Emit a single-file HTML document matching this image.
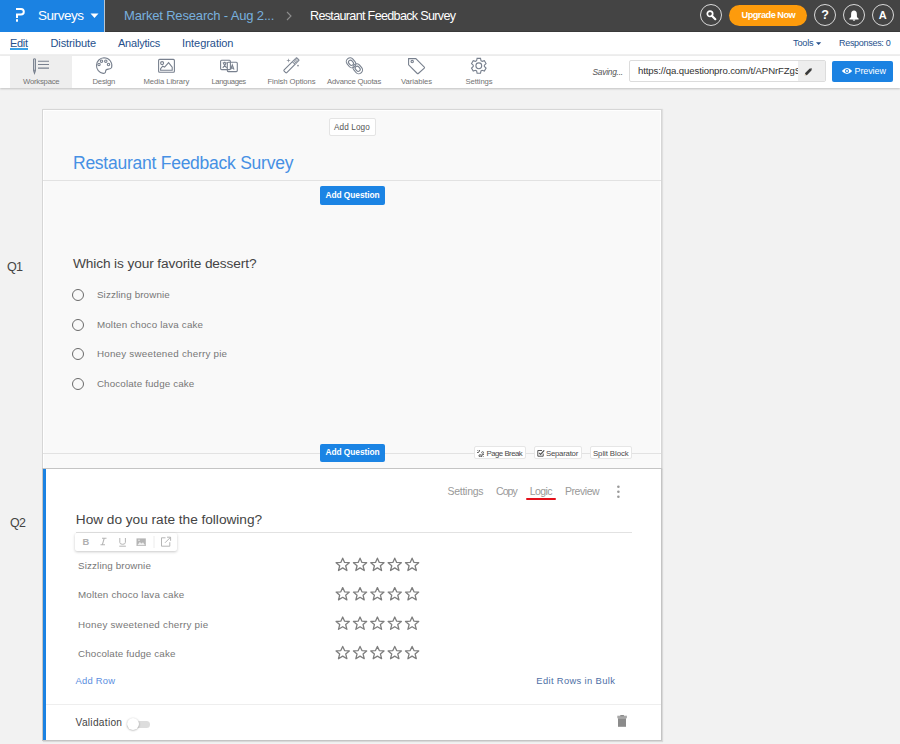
<!DOCTYPE html>
<html><head><meta charset="utf-8">
<style>
*{box-sizing:border-box;margin:0;padding:0}
html,body{width:900px;height:744px;overflow:hidden;background:#f2f2f2;font-family:"Liberation Sans",sans-serif;position:relative}
.a{position:absolute;white-space:nowrap;line-height:1}
#hdr{position:absolute;left:0;top:0;width:900px;height:32px;background:#444;border-bottom:1px solid #3a3a3a}
#blue{position:absolute;left:0;top:0;width:104px;height:32px;background:#1b82e2}
#sep{position:absolute;left:104px;top:0;width:1px;height:32px;background:#b9c6d2}
#sub{position:absolute;left:0;top:32px;width:900px;height:24px;background:#fff;border-bottom:2px solid #efefef}
#tb{position:absolute;left:0;top:56px;width:900px;height:32px;background:#fff;box-shadow:0 1px 2px rgba(0,0,0,.2)}
.nav{color:#26508c;font-size:11px;top:37.5px}
.lbl{position:absolute;top:78.2px;font-size:7.7px;color:#737373;white-space:nowrap;line-height:1}
.circ{position:absolute;top:4px;width:22px;height:22px;border:1px solid #d9d9d9;border-radius:50%}
.ic{fill:none;stroke:#78808e;stroke-width:1.1}

#card1{position:absolute;left:43px;top:110px;width:618px;height:358px;background:#f9f9f9;box-shadow:inset 1px 1px 0 #fff,inset -1px 0 0 #fff,0 0 0 1px #d6d6d6,1px 0 1px 1px rgba(0,0,0,.07)}
#card2{position:absolute;left:43px;top:469px;width:618px;height:271px;background:#fff;box-shadow:0 0 0 1px #c4c4c4,1px 1px 1px 1px rgba(0,0,0,.1)}
.btnq{width:64.5px;height:18.7px;background:#1b84e4;border-radius:2px}
.qt{font-size:8.4px;font-weight:bold;color:#fff;letter-spacing:-0.05px}
.radio{position:absolute;left:72px;width:12.2px;height:12.2px;border:1px solid #6a6a6a;border-radius:50%}
.opt{position:absolute;left:96.9px;font-size:9.8px;color:#777;white-space:nowrap;line-height:1;letter-spacing:0.14px}
.row{position:absolute;left:78px;font-size:9.8px;color:#777;white-space:nowrap;line-height:1;letter-spacing:0.14px}
.smb{top:445.5px;height:13.5px;background:#fff;border:1px solid #e6e6e6;border-radius:2px}
.smt{top:449.6px;font-size:7.8px;color:#4a4a4a}
.mt{top:485.6px;font-size:10.5px;color:#999}
</style></head><body>
<div id="hdr"></div>
<div id="blue"></div>
<div id="sep"></div>
<svg class="a" style="left:0;top:0" width="32" height="32" viewBox="0 0 32 32"><path d="M16 8.9H21A2.8 2.8 0 0 1 21 14.5H17V18" fill="none" stroke="#fff" stroke-width="2"/><rect x="16" y="19.2" width="2" height="2.5" fill="#fff"/></svg>
<div class="a" style="left:38px;top:8.5px;font-size:13.5px;color:#fff;letter-spacing:-0.45px">Surveys</div>
<svg class="a" style="left:90px;top:13px" width="9" height="6" viewBox="0 0 9 6"><path d="M0.5 0.5h8L4.5 5z" fill="#fff"/></svg>
<div class="a" style="left:124px;top:8.5px;font-size:13px;color:#78b0de;letter-spacing:-0.17px">Market Research - Aug 2...</div>
<svg class="a" style="left:285px;top:11px" width="9" height="10" viewBox="0 0 9 10"><path d="M2 1l4 4-4 4" fill="none" stroke="#8e8e8e" stroke-width="1.1"/></svg>
<div class="a" style="left:310px;top:10px;font-size:12.6px;color:#fff;letter-spacing:-0.68px">Restaurant Feedback Survey</div>
<div class="circ" style="left:700px"></div>
<svg class="a" style="left:700px;top:4px" width="22" height="22" viewBox="0 0 22 22"><circle cx="10" cy="9.8" r="2.7" fill="none" stroke="#fff" stroke-width="1.7"/><path d="M11.8 11.8L15.3 15.2" stroke="#fff" stroke-width="2.2" stroke-linecap="round"/></svg>
<div class="a" style="left:729px;top:5px;width:78px;height:21px;border-radius:11px;background:#fd9b0c"></div>
<div class="a" style="left:741.5px;top:10.6px;font-size:9.2px;color:#fff;font-weight:bold;letter-spacing:-0.5px">Upgrade Now</div>
<div class="circ" style="left:813.5px"></div>
<div class="a" style="left:821.2px;top:9px;font-size:12.6px;color:#fff;font-weight:bold">?</div>
<div class="circ" style="left:842.5px"></div>
<svg class="a" style="left:842.5px;top:4px" width="22" height="22" viewBox="0 0 22 22"><path d="M11 6.6C9.2 6.6 8.1 8 8.1 10.2V12.6Q8.1 13.6 6.4 14.6V15.4H15.6V14.6Q13.9 13.6 13.9 12.6V10.2C13.9 8 12.8 6.6 11 6.6Z" fill="#fff"/><path d="M9.6 15.6Q9.8 16.8 11 16.8Q12.2 16.8 12.4 15.6Z" fill="#fff"/></svg>
<div class="circ" style="left:871.5px"></div>
<div class="a" style="left:878.8px;top:10px;font-size:11px;color:#fff;font-weight:bold">A</div>

<div id="sub"></div>
<div class="a nav" style="left:10px;letter-spacing:-0.3px">Edit</div>
<div class="a" style="left:10px;top:48px;width:18px;height:1.5px;background:#3aa0e6"></div>
<div class="a nav" style="left:50.5px;letter-spacing:-0.1px">Distribute</div>
<div class="a nav" style="left:118px;letter-spacing:-0.22px">Analytics</div>
<div class="a nav" style="left:182px;letter-spacing:-0.05px">Integration</div>
<div class="a nav" style="left:793px;top:39px;font-size:9.2px;letter-spacing:-0.2px">Tools</div>
<svg class="a" style="left:816px;top:42px" width="6" height="4" viewBox="0 0 6 4"><path d="M0 0.3h5.2L2.6 3z" fill="#26508c"/></svg>
<div class="a nav" style="left:839px;top:39.3px;font-size:9px;letter-spacing:-0.3px">Responses: 0</div>

<div id="tb"></div>
<div class="a" style="left:10px;top:56px;width:62px;height:32px;background:#eee"></div>
<svg class="a" style="left:0;top:0" width="500" height="90" viewBox="0 0 500 90">
 <!-- workspace -->
 <path class="ic" d="M33.6 59.2Q34.5 58.3 35.4 59.2V70.6L34.5 73.2L33.6 70.6Z M33.6 70.2H35.4"/>
 <path class="ic" d="M38 61.3H49M38 64.5H49M38 68.1H49" stroke-width="1.2"/>
 <!-- design -->
 <path class="ic" d="M104 57.7A7.9 7.9 0 0 1 111.6 67.6Q111 69 108.3 69.1Q105.6 69.3 105.6 71.3Q105.6 73.5 103.2 73.4A7.9 7.9 0 0 1 104 57.7Z"/>
 <circle class="ic" cx="99" cy="64.4" r="1.2"/><circle class="ic" cx="101.5" cy="61.2" r="1.2"/><circle class="ic" cx="105.8" cy="61.2" r="1.2"/><circle class="ic" cx="108.5" cy="64.5" r="1.2"/>
 <!-- media -->
 <rect class="ic" x="158.6" y="59.4" width="15.8" height="12.9" rx="1"/>
 <circle class="ic" cx="162.1" cy="63.1" r="1.5"/>
 <path class="ic" d="M160.6 70.2V68.7L162.7 66.2L164.6 67L168.6 62.6L172.2 67.2V70.2Z"/>
 <!-- languages -->
 <rect class="ic" x="220.6" y="60.3" width="9.8" height="9.3" rx="1"/>
 <path class="ic" d="M222.7 62.8H226.7M224.7 61.7V62.8M223.3 62.8Q224.2 65.8 226.7 67.8M226.1 62.8Q225.2 65.8 222.7 67.8" stroke-width="0.9"/>
 <rect class="ic" x="227.3" y="62.3" width="10" height="9.3" rx="1" fill="#fff"/>
 <path class="ic" d="M230.6 69.6L232.3 64.8L234 69.6M231.2 68.1H233.4" stroke-width="1"/>
 <!-- wand -->
 <g transform="rotate(-45 291.4 65.3)">
  <rect class="ic" x="282.2" y="63.4" width="18.4" height="3.8" rx="0.8"/>
  <rect x="294" y="63.4" width="6.6" height="3.8" fill="#8e95a0"/>
  <path d="M295.6 63.4V67.2M297.3 63.4V67.2M299 63.4V67.2" stroke="#fff" stroke-width="0.5"/>
  <path d="M294 65.3H300.6" stroke="#fff" stroke-width="0.5"/>
 </g>
 <path d="M288.5 58.2L289 60L290.8 60.5L289 61L288.5 62.8L288 61L286.2 60.5L288 60Z" fill="#8a909a"/>
 <circle cx="298" cy="65.6" r="0.9" fill="#8a909a"/>
 <!-- chain -->
 <rect class="ic" x="347.3" y="57.6" width="7.5" height="10.5" rx="3.6" transform="rotate(-40 351 62.8)"/>
 <rect class="ic" x="349" y="60" width="4" height="5.6" rx="2" transform="rotate(-40 351 62.8)"/>
 <rect class="ic" x="354" y="63.6" width="7.5" height="10.5" rx="3.6" transform="rotate(-40 357.7 68.8)"/>
 <rect class="ic" x="355.7" y="66" width="4" height="5.6" rx="2" transform="rotate(-40 357.7 68.8)"/>
 <!-- tag -->
 <path class="ic" d="M408.6 58.6H415.8L424.3 67.1Q424.8 67.6 424.3 68.1L418.3 73.5Q417.8 74 417.3 73.5L408.6 64.8Z"/>
 <circle class="ic" cx="412.2" cy="61.6" r="1.2"/>
 <!-- gear -->
 <path class="ic" d="M476.61 60.65 L477.09 58.39 L480.51 58.39 L480.99 60.65 L482.17 61.33 L484.36 60.62 L486.07 63.58 L484.36 65.12 L484.36 66.48 L486.07 68.02 L484.36 70.98 L482.17 70.27 L480.99 70.95 L480.51 73.21 L477.09 73.21 L476.61 70.95 L475.43 70.27 L473.24 70.98 L471.53 68.02 L473.24 66.48 L473.24 65.12 L471.53 63.58 L473.24 60.62 L475.43 61.33Z"/>
 <circle class="ic" cx="478.8" cy="65.8" r="2.9"/>
</svg>
<div class="lbl" style="left:23px;letter-spacing:-0.21px">Workspace</div>
<div class="lbl" style="left:92.5px;letter-spacing:-0.22px">Design</div>
<div class="lbl" style="left:143.5px;letter-spacing:-0.06px">Media Library</div>
<div class="lbl" style="left:211.5px;letter-spacing:-0.42px">Languages</div>
<div class="lbl" style="left:267.5px;letter-spacing:-0.08px">Finish Options</div>
<div class="lbl" style="left:327px;letter-spacing:-0.2px">Advance Quotas</div>
<div class="lbl" style="left:401px;letter-spacing:-0.04px">Variables</div>
<div class="lbl" style="left:465.5px;letter-spacing:-0.09px">Settings</div>
<div class="a" style="left:592.5px;top:68px;font-size:8.4px;font-style:italic;color:#555;letter-spacing:-0.25px">Saving...</div>
<div class="a" style="left:629px;top:60px;width:197px;height:22px;border:1px solid #dcdcdc;border-radius:2px;background:#fff;overflow:hidden">
  <div class="a" style="left:8px;top:5.3px;font-size:9.6px;color:#333;letter-spacing:-0.12px">https://qa.questionpro.com/t/APNrFZgS</div>
  <div class="a" style="left:168px;top:0;width:28px;height:20px;background:#eee"></div>
  <svg class="a" style="left:173px;top:6px" width="10" height="10" viewBox="0 0 10 10"><path d="M2.6 6.4L6.9 2.1L8 3.2L3.7 7.5Z" fill="#3a3a3a" stroke="#3a3a3a" stroke-width="1.2" stroke-linejoin="round"/><path d="M7.6 1.4L8.7 2.5" stroke="#555" stroke-width="1.3"/><path d="M2.1 6.9L3.2 8L1.6 8.5Z" fill="#b89a6a"/></svg>
</div>
<div class="a" style="left:832px;top:61px;width:61px;height:21px;border-radius:2px;background:#1b82e2"></div>
<svg class="a" style="left:841px;top:66px" width="12" height="10" viewBox="0 0 12 10"><path d="M0.8 5Q6 -1 11.2 5Q6 11 0.8 5Z" fill="#fff"/><circle cx="6" cy="5" r="2" fill="#1b82e2"/><circle cx="6" cy="5" r="1" fill="#fff"/></svg>
<div class="a" style="left:854.5px;top:66.5px;font-size:9px;color:#fff;letter-spacing:-0.1px">Preview</div>
<div class="a" style="left:7px;top:260.5px;font-size:12.6px;color:#444;letter-spacing:-0.9px">Q1</div>
<div class="a" style="left:10px;top:517px;font-size:12.4px;color:#444;letter-spacing:-0.6px">Q2</div>

<div id="card1"></div>
<div class="a" style="left:328.5px;top:117.5px;width:47px;height:18px;background:#fff;border:1px solid #e4e4e4;border-radius:2px"></div>
<div class="a" style="left:334px;top:124.4px;font-size:8.2px;color:#555;letter-spacing:0.1px">Add Logo</div>
<div class="a" style="left:73px;top:155.2px;font-size:17.5px;color:#4690e4;letter-spacing:-0.25px">Restaurant Feedback Survey</div>
<div class="a" style="left:43px;top:180px;width:618px;height:1px;background:#e2e2e2"></div>
<div class="a btnq" style="left:320px;top:186px"></div>
<div class="a qt" style="left:325.4px;top:190.6px">Add Question</div>
<div class="a" style="left:73px;top:257.4px;font-size:13.7px;color:#444;letter-spacing:-0.12px">Which is your favorite dessert?</div>
<div class="radio" style="top:289.3px"></div><div class="opt" style="top:289.5px">Sizzling brownie</div>
<div class="radio" style="top:319px"></div><div class="opt" style="top:320.2px;letter-spacing:0.18px">Molten choco lava cake</div>
<div class="radio" style="top:348px"></div><div class="opt" style="top:348.6px;letter-spacing:0.24px">Honey sweetened cherry pie</div>
<div class="radio" style="top:377.6px"></div><div class="opt" style="top:379.2px;letter-spacing:0.14px">Chocolate fudge cake</div>
<div class="a" style="left:43px;top:453px;width:618px;height:1px;background:#e2e2e2"></div>
<div class="a btnq" style="left:320px;top:443.5px"></div>
<div class="a qt" style="left:325.4px;top:448px">Add Question</div>
<div class="a smb" style="left:473.5px;width:52px"></div>
<svg class="a" style="left:476px;top:448.5px" width="9" height="9" viewBox="0 0 9 9"><path d="M1.5 1.2L3 2.7M1 3.5H2.8M3.5 1V2.6M3.6 6.8L5.6 4.8M5.2 3.6Q6.6 2.2 7.3 2.9Q8 3.6 6.6 5M3.8 5.3Q2.4 6.7 3.1 7.4Q3.8 8.1 5.2 6.7M7.5 7.8L6 6.3M8 5.5H6.2M5.5 8V6.4" fill="none" stroke="#555" stroke-width="0.9"/></svg>
<div class="a smt" style="left:486.5px;letter-spacing:-0.5px">Page Break</div>
<div class="a smb" style="left:533.5px;width:48px"></div>
<svg class="a" style="left:536.5px;top:449px" width="8" height="8" viewBox="0 0 8 8"><path d="M0.8 1.5H5M0.8 1.5V7.2H6.2V4.5" fill="none" stroke="#555" stroke-width="1"/><path d="M2.2 4L3.6 5.4L7.2 1.4" fill="none" stroke="#555" stroke-width="1.3"/></svg>
<div class="a smt" style="left:546px;letter-spacing:-0.25px">Separator</div>
<div class="a smb" style="left:589.5px;width:42px"></div>
<div class="a smt" style="left:593px;letter-spacing:-0.08px">Split Block</div>

<div id="card2"></div>
<div class="a" style="left:43px;top:469px;width:3px;height:271px;background:#1b82e2"></div>
<div class="a mt" style="left:447.4px;letter-spacing:-0.25px">Settings</div>
<div class="a mt" style="left:496px;letter-spacing:-0.9px">Copy</div>
<div class="a mt" style="left:529.7px;letter-spacing:-0.6px">Logic</div>
<div class="a" style="left:525.5px;top:497.6px;width:30px;height:2.6px;border-radius:1.3px;background:#e3101b"></div>
<div class="a mt" style="left:565px;letter-spacing:-0.45px">Preview</div>
<svg class="a" style="left:616px;top:485px" width="5" height="14" viewBox="0 0 5 14"><circle cx="2.4" cy="1.8" r="1.3" fill="#9a9a9a"/><circle cx="2.4" cy="6.8" r="1.3" fill="#9a9a9a"/><circle cx="2.4" cy="11.8" r="1.3" fill="#9a9a9a"/></svg>
<div class="a" style="left:75.8px;top:512.5px;font-size:13.7px;color:#444;letter-spacing:-0.03px">How do you rate the following?</div>
<div class="a" style="left:76px;top:531.5px;width:556px;height:1px;background:#e2e2e2"></div>
<div class="a" style="left:75px;top:533px;width:102px;height:18px;background:#fff;border-radius:2px;box-shadow:0 1px 3px rgba(0,0,0,.22)"></div>
<svg class="a" style="left:75px;top:533px" width="102" height="18" viewBox="0 0 102 18">
 <text x="7.6" y="11.8" font-family="Liberation Sans" font-weight="bold" font-size="9.4" fill="#b0b0b0">B</text>
 <path d="M27 5.3H31.5M25.5 11.8H30M29.2 5.3L27.3 11.8" stroke="#b5b5b5" stroke-width="1.1" fill="none"/>
 <path d="M44.8 5V9.4Q44.8 11.3 47.6 11.3Q50.4 11.3 50.4 9.4V5M44.3 13.2H50.9" stroke="#b5b5b5" stroke-width="1" fill="none"/>
 <path d="M61.5 5.4H70.8V13H61.5Z" fill="#b5b5b5"/><path d="M62.3 12.2L64.8 9L66.5 10.5L68 9.3L70 12.2Z" fill="#eee"/><circle cx="64" cy="7.3" r="0.8" fill="#eee"/>
 <path d="M79 3V15" stroke="#ececec" stroke-width="1"/>
 <path d="M90.5 4.8H86.5V13.2H94.8V9.2M92 4.2H95.6V7.8M95.4 4.4L90 9.8" stroke="#b5b5b5" stroke-width="1" fill="none"/>
</svg>
<div class="row" style="top:561.1px">Sizzling brownie</div>
<div class="row" style="top:590.4px;letter-spacing:0.18px">Molten choco lava cake</div>
<div class="row" style="top:620.2px;letter-spacing:0.24px">Honey sweetened cherry pie</div>
<div class="row" style="top:648.5px;letter-spacing:0.14px">Chocolate fudge cake</div>
<svg class="a" style="left:330px;top:555px" width="95" height="105" viewBox="0 0 95 105"><path d="M12.70 3.20L14.60 7.40L19.30 7.70L15.70 10.75L16.90 15.50L12.70 12.90L8.50 15.50L9.70 10.75L6.10 7.70L10.80 7.40Z M30.05 3.20L31.95 7.40L36.65 7.70L33.05 10.75L34.25 15.50L30.05 12.90L25.85 15.50L27.05 10.75L23.45 7.70L28.15 7.40Z M47.40 3.20L49.30 7.40L54.00 7.70L50.40 10.75L51.60 15.50L47.40 12.90L43.20 15.50L44.40 10.75L40.80 7.70L45.50 7.40Z M64.75 3.20L66.65 7.40L71.35 7.70L67.75 10.75L68.95 15.50L64.75 12.90L60.55 15.50L61.75 10.75L58.15 7.70L62.85 7.40Z M82.10 3.20L84.00 7.40L88.70 7.70L85.10 10.75L86.30 15.50L82.10 12.90L77.90 15.50L79.10 10.75L75.50 7.70L80.20 7.40Z M12.70 32.60L14.60 36.80L19.30 37.10L15.70 40.15L16.90 44.90L12.70 42.30L8.50 44.90L9.70 40.15L6.10 37.10L10.80 36.80Z M30.05 32.60L31.95 36.80L36.65 37.10L33.05 40.15L34.25 44.90L30.05 42.30L25.85 44.90L27.05 40.15L23.45 37.10L28.15 36.80Z M47.40 32.60L49.30 36.80L54.00 37.10L50.40 40.15L51.60 44.90L47.40 42.30L43.20 44.90L44.40 40.15L40.80 37.10L45.50 36.80Z M64.75 32.60L66.65 36.80L71.35 37.10L67.75 40.15L68.95 44.90L64.75 42.30L60.55 44.90L61.75 40.15L58.15 37.10L62.85 36.80Z M82.10 32.60L84.00 36.80L88.70 37.10L85.10 40.15L86.30 44.90L82.10 42.30L77.90 44.90L79.10 40.15L75.50 37.10L80.20 36.80Z M12.70 62.00L14.60 66.20L19.30 66.50L15.70 69.55L16.90 74.30L12.70 71.70L8.50 74.30L9.70 69.55L6.10 66.50L10.80 66.20Z M30.05 62.00L31.95 66.20L36.65 66.50L33.05 69.55L34.25 74.30L30.05 71.70L25.85 74.30L27.05 69.55L23.45 66.50L28.15 66.20Z M47.40 62.00L49.30 66.20L54.00 66.50L50.40 69.55L51.60 74.30L47.40 71.70L43.20 74.30L44.40 69.55L40.80 66.50L45.50 66.20Z M64.75 62.00L66.65 66.20L71.35 66.50L67.75 69.55L68.95 74.30L64.75 71.70L60.55 74.30L61.75 69.55L58.15 66.50L62.85 66.20Z M82.10 62.00L84.00 66.20L88.70 66.50L85.10 69.55L86.30 74.30L82.10 71.70L77.90 74.30L79.10 69.55L75.50 66.50L80.20 66.20Z M12.70 91.40L14.60 95.60L19.30 95.90L15.70 98.95L16.90 103.70L12.70 101.10L8.50 103.70L9.70 98.95L6.10 95.90L10.80 95.60Z M30.05 91.40L31.95 95.60L36.65 95.90L33.05 98.95L34.25 103.70L30.05 101.10L25.85 103.70L27.05 98.95L23.45 95.90L28.15 95.60Z M47.40 91.40L49.30 95.60L54.00 95.90L50.40 98.95L51.60 103.70L47.40 101.10L43.20 103.70L44.40 98.95L40.80 95.90L45.50 95.60Z M64.75 91.40L66.65 95.60L71.35 95.90L67.75 98.95L68.95 103.70L64.75 101.10L60.55 103.70L61.75 98.95L58.15 95.90L62.85 95.60Z M82.10 91.40L84.00 95.60L88.70 95.90L85.10 98.95L86.30 103.70L82.10 101.10L77.90 103.70L79.10 98.95L75.50 95.90L80.20 95.60Z" fill="none" stroke="#7e7e7e" stroke-width="1.3" stroke-linejoin="round"/></svg>
<div class="a" style="left:75.6px;top:676px;font-size:9.4px;color:#5a8ee0;letter-spacing:0.22px">Add Row</div>
<div class="a" style="left:536.3px;top:676.2px;font-size:9.4px;color:#4e6fa6;letter-spacing:0.35px">Edit Rows in Bulk</div>
<div class="a" style="left:46px;top:704px;width:615px;height:1px;background:#eee"></div>
<div class="a" style="left:75.6px;top:718.4px;font-size:10.2px;color:#444;letter-spacing:0.27px">Validation</div>
<div class="a" style="left:127px;top:720.9px;width:23px;height:6.8px;border-radius:3.5px;background:#ddd"></div>
<div class="a" style="left:126.5px;top:717.8px;width:12px;height:12px;border-radius:50%;background:#fff;box-shadow:0 0.5px 2px rgba(0,0,0,.35)"></div>
<svg class="a" style="left:616px;top:714px" width="12" height="14" viewBox="0 0 12 14"><rect x="1.3" y="1.7" width="9.6" height="2.6" fill="#a8a8a8"/><rect x="4.3" y="1.2" width="3.6" height="1" fill="#777"/><rect x="2" y="4.3" width="8" height="8.5" fill="#8b8b8b"/></svg>
</body></html>
